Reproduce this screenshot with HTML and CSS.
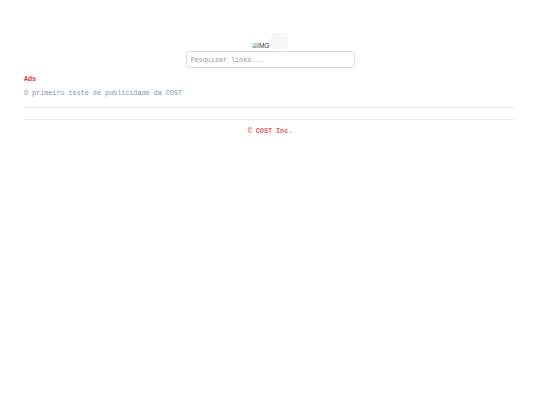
FILE: index.html
```html
<!DOCTYPE html>
<html lang="pt">
<head>
<meta charset="utf-8">
<title>COST</title>
<link rel="stylesheet" href="styles.css">
</head>
<body>
<div class="page">
  <header class="header">
    <div class="logos">
      <span class="broken"><svg class="broken-icon" viewBox="0 0 8 8" width="5" height="5"><rect x="0.5" y="0.5" width="7" height="7" rx="1" fill="#dfe8ef" stroke="#9aa8b4" stroke-width="0.6"/><path d="M0.8 7.2 L3 4.2 L4.6 5.8 L5.8 4.6 L7.2 6.4 L7.2 7.2 Z" fill="#5aa04a"/><circle cx="5.6" cy="2.4" r="0.9" fill="#7fb0d8"/></svg>IMG</span>
      <span class="avatar"></span>
    </div>
    <input class="search" type="text" placeholder="Pesquisar links...">
  </header>
  <section class="ads">
    <h3 class="ads-title">Ads</h3>
    <a class="ad-link" href="#">O primeiro teste de publicidade da COST</a>
  </section>
  <div class="divider first"></div>
  <div class="divider"></div>
  <footer class="footer">© COST Inc.</footer>
</div>
</body>
</html>
```
FILE: styles.css
```css
html, body {
  margin: 0;
  padding: 0;
  background: #ffffff;
}
body {
  font-family: "Courier New", "Liberation Mono", monospace;
  font-size: 6.75px;
  color: #333;
}
.page {
  padding: 0 24px;
}
.header {
  padding-top: 33px;
  display: flex;
  flex-direction: column;
  align-items: center;
}
.logos {
  display: flex;
  align-items: flex-end;
  gap: 2px;
}
.broken {
  font-family: "Liberation Sans", Arial, sans-serif;
  font-size: 6.5px;
  color: #333;
  display: flex;
  align-items: center;
  line-height: 7px;
}
.broken-icon {
  margin-right: 0.5px;
}
.avatar {
  width: 17px;
  height: 16px;
  border-radius: 4px;
  background: #f6f6f6;
}
.search {
  margin-top: 2px;
  width: 169px;
  height: 17px;
  box-sizing: border-box;
  border: 1px solid #dddddd;
  border-radius: 3px;
  padding: 0 4px;
  font-family: "Courier New", "Liberation Mono", monospace;
  font-size: 6.75px;
  color: #333;
  outline: none;
}
.search::placeholder {
  color: #9a9a9a;
}
.ads {
  margin-top: 7px;
}
.ads-title {
  margin: 0;
  font-size: 6.75px;
  font-weight: bold;
  color: #d8343f;
  line-height: 9px;
}
.ad-link {
  display: block;
  margin-top: 5px;
  color: #7d95ad;
  text-decoration: none;
  line-height: 9px;
}
.divider {
  border-top: 1px solid #ececec;
  height: 11px;
}
.divider.first {
  margin-top: 9px;
}
.footer {
  text-align: center;
  color: #e05a5a;
  font-weight: bold;
  line-height: 9px;
  margin-top: -4px;
}
```
